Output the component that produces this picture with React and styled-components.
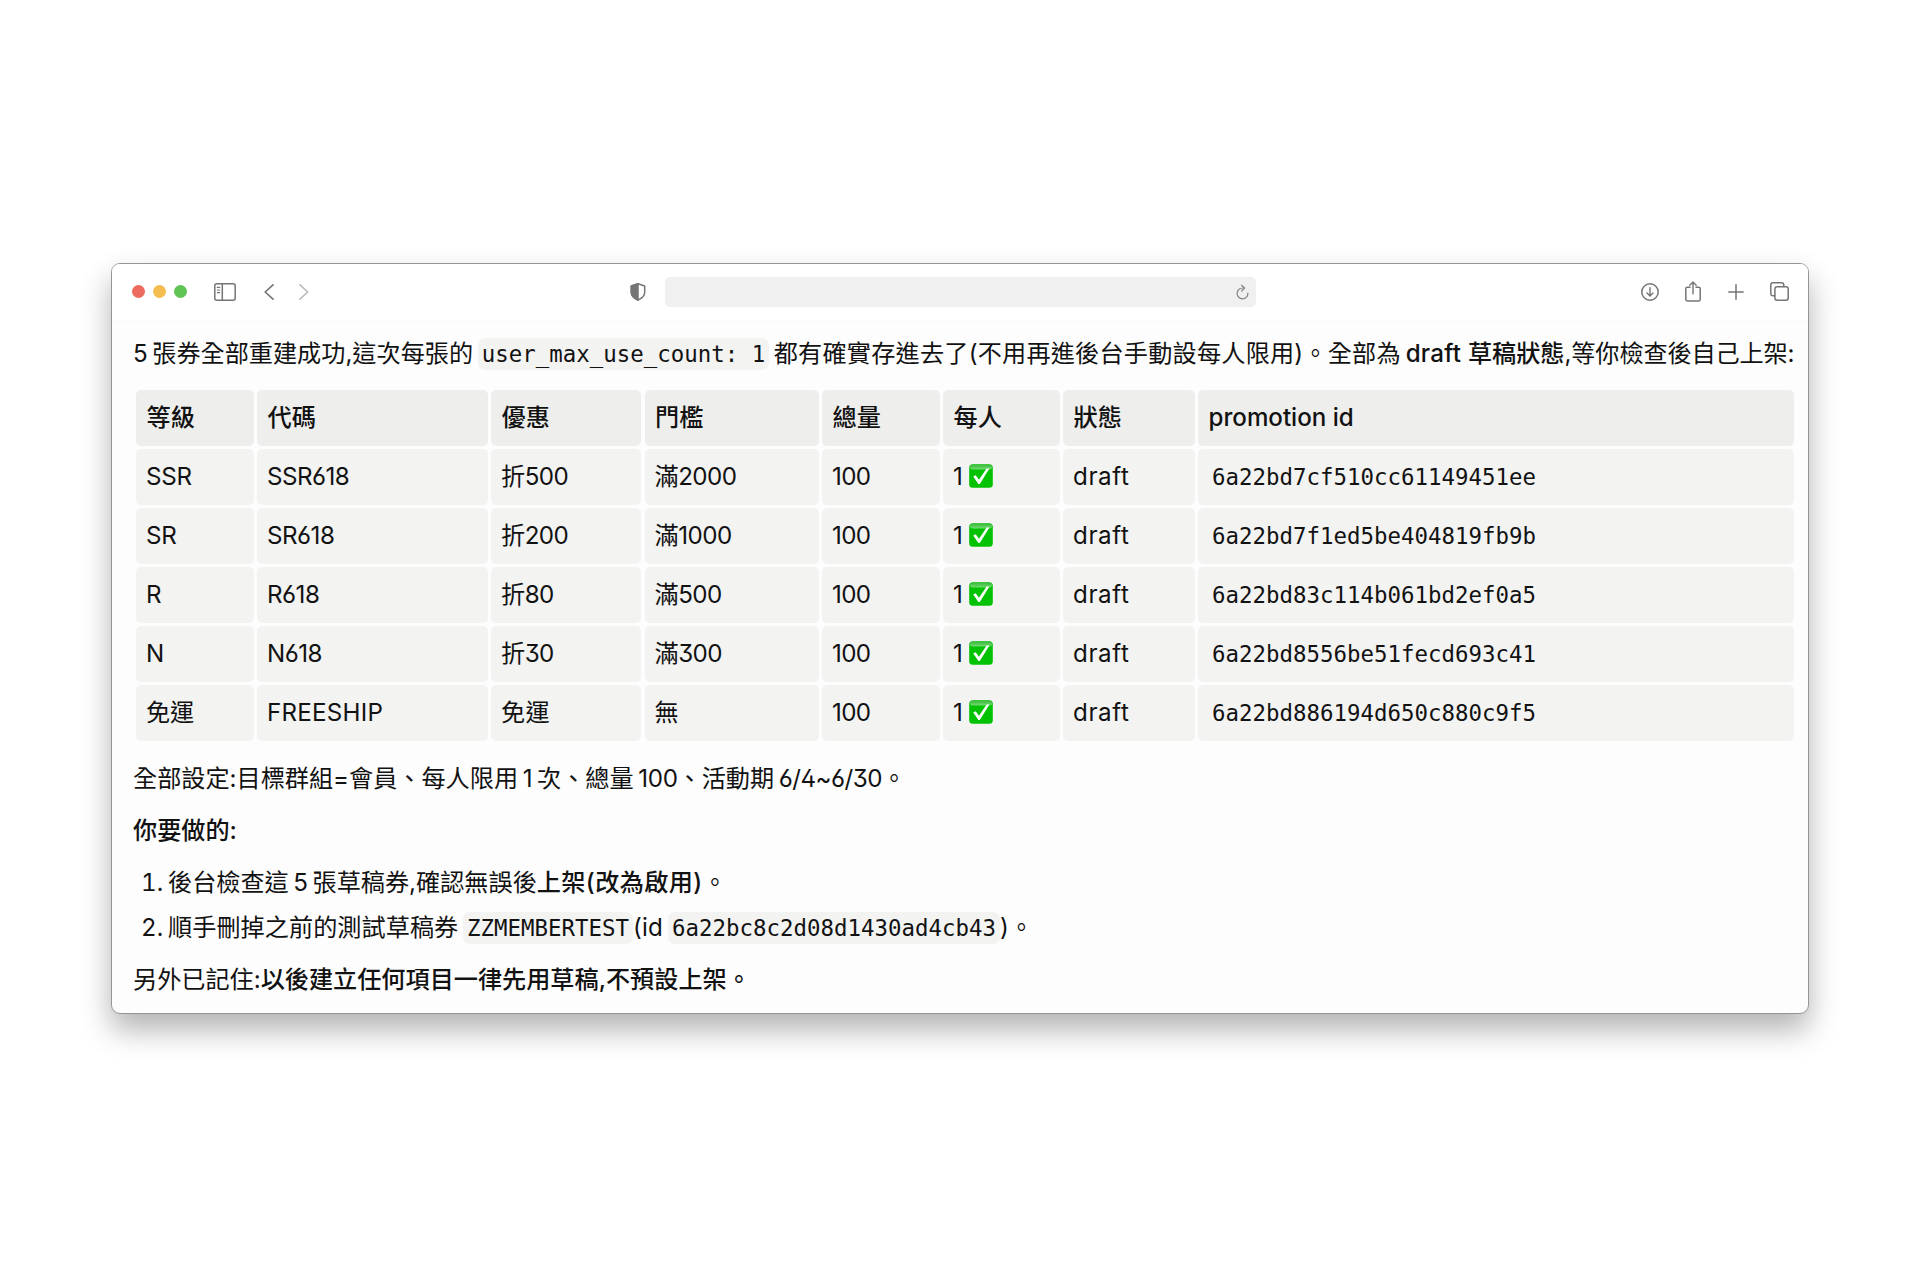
import React from 'react';
import styled, { createGlobalStyle } from 'styled-components';

const GlobalStyle = createGlobalStyle`
  * {
    box-sizing: border-box;
  }
  body {
    margin: 0;
    background: #fff;
    color: #121212;
    font-family: Inter, "Noto Sans CJK TC", sans-serif;
    font-size: 24.15px;
    font-feature-settings: "ss01";
  }
`;

const Page = styled.main`
  display: flex;
  align-items: flex-start;
  height: 1280px;
  padding: 263px 0 0 111px;
`;

const Window = styled.section`
  width: 1698px;
  height: 751px;
  border: 1px solid #959595;
  border-radius: 9px;
  background: #fdfdfd;
  overflow: hidden;
  box-shadow: 0 16px 30px rgba(0, 0, 0, 0.3);
`;

const Toolbar = styled.header`
  display: flex;
  align-items: center;
  height: 57px;
  padding: 0 19px 1px 20px;
  background: #fff;
  border-bottom: 1px solid #fafafa;
  color: #757575;
`;

const Lights = styled.div`
  display: flex;
  gap: 8px;
  margin-right: 26.5px;
`;

const Light = styled.span`
  width: 13px;
  height: 13px;
  border-radius: 50%;
  background: ${(props) => props.$color};
`;

const Icon = styled.svg`
  flex: none;
  width: ${(props) => props.$w}px;
  height: ${(props) => props.$h}px;
  margin-left: ${(props) => props.$ml || 0}px;
  color: ${(props) => props.$color || 'inherit'};
  fill: none;
  stroke: currentColor;
  stroke-width: 1.5;
  stroke-linecap: round;
  stroke-linejoin: round;
`;

const AddressBar = styled.div`
  display: flex;
  align-items: center;
  justify-content: flex-end;
  width: 591px;
  height: 30px;
  margin-left: 19px;
  padding-right: 7px;
  border-radius: 5px;
  background: #f0f0f0;
`;

const Actions = styled.div`
  display: flex;
  align-items: center;
  margin-left: auto;
`;

const Content = styled.article`
  padding: 15px 14px 0 21px;
  line-height: 36px;
  white-space: nowrap;
  word-spacing: -2.2px;
`;

const Paragraph = styled.p`
  height: 36px;
  margin: 0 0 ${(props) => props.$mb || 16}px;
`;

const Strong = styled.strong`
  font-weight: 500;
  word-spacing: 0;
`;

const Run = styled.span`
  letter-spacing: ${(props) => props.$ls}px;
`;

const Code = styled.code`
  padding: 3px 4px;
  border-radius: 7px;
  background: #f3f3f2;
  font-family: "DejaVu Sans Mono", monospace;
  font-size: 22.4px;
  letter-spacing: 0.02px;
  word-spacing: 0;
`;

const Table = styled.div`
  display: grid;
  grid-template-columns: 117.5px 230.5px 150px 174px 117.5px 116.5px 131.5px 596px;
  grid-auto-rows: 55.5px;
  gap: 3.5px;
  margin: 0 0 20.5px 3px;
`;

const Row = styled.div`
  display: contents;
`;

const Cell = styled.div`
  display: flex;
  align-items: center;
  padding: 1px 10px 0;
  border-radius: 5px;
  background: #f3f3f2;
  letter-spacing: ${(props) => props.$ls || 0}px;
`;

const HeadCell = styled(Cell)`
  padding-left: 10.5px;
  background: #eeeeed;
  font-weight: 500;
  word-spacing: 0;
`;

const CheckIcon = styled.svg`
  width: 24px;
  height: 24px;
  margin: -3px 0 0 6px;
`;

const List = styled.ol`
  display: flex;
  flex-direction: column;
  gap: 9px;
  margin: 0 0 16px;
  padding: 0;
  list-style: none;
`;

const Item = styled.li`
  display: flex;
  height: 36px;
`;

const Marker = styled.span`
  width: 35px;
  padding-left: 8px;
  font-variant-numeric: tabular-nums;
`;

const columns = ['等級', '代碼', '優惠', '門檻', '總量', '每人', '狀態', 'promotion id'];

const coupons = [
  { level: 'SSR', code: 'SSR618', offer: '折500', min: '滿2000', id: '6a22bd7cf510cc61149451ee' },
  { level: 'SR', code: 'SR618', offer: '折200', min: '滿1000', id: '6a22bd7f1ed5be404819fb9b' },
  { level: 'R', code: 'R618', offer: '折80', min: '滿500', id: '6a22bd83c114b061bd2ef0a5' },
  { level: 'N', code: 'N618', offer: '折30', min: '滿300', id: '6a22bd8556be51fecd693c41' },
  { level: '免運', code: 'FREESHIP', offer: '免運', min: '無', id: '6a22bd886194d650c880c9f5' },
];

const tracking = (text) => (/\d/.test(text) ? -0.5 : 0.25);

function Check() {
  return (
    <CheckIcon viewBox="0 0 24 24" role="img" aria-label="✅">
      <defs>
        <linearGradient id="gloss" x1="0" y1="0" x2="0" y2="1">
          <stop offset="0" stopColor="#3cb83c" />
          <stop offset="1" stopColor="#6fdc6f" />
        </linearGradient>
      </defs>
      <rect x="0.2" y="0.2" width="23.6" height="23.6" rx="3.6" fill="#03c103" />
      <rect x="0.8" y="0.8" width="22.4" height="4.6" rx="2.3" fill="url(#gloss)" />
      <path d="M4.2 12.6 6.7 11.2 10 15.8 17.6 4.6H20.4L10.8 20H9.4Z" fill="#fff" />
    </CheckIcon>
  );
}

function BrowserBar() {
  return (
    <Toolbar>
      <Lights>
        <Light $color="#ec6a5e" />
        <Light $color="#f3bd4f" />
        <Light $color="#5fc454" />
      </Lights>
      <Icon viewBox="0 0 22 18" $w={22} $h={18}>
        <rect x="0.8" y="0.8" width="20.4" height="16.4" rx="2" />
        <path d="M8.3 1v16" />
        <path d="M3.3 4.4h2.4M3.3 7h2.4M3.3 9.6h2.4" strokeWidth="1.1" />
      </Icon>
      <Icon viewBox="0 0 10 16" $w={10} $h={16} $ml={28.5}>
        <path d="M9 .8 1.2 8 9 15.2" strokeWidth="1.7" />
      </Icon>
      <Icon viewBox="0 0 10 16" $w={10} $h={16} $ml={25} $color="#bdbdbd">
        <path d="M1 .8 8.8 8 1 15.2" strokeWidth="1.7" />
      </Icon>
      <Icon viewBox="0 0 16 18" $w={16} $h={18} $ml={321}>
        <path d="M8 .8 14.7 3v6.6c0 3.7-3.2 5.9-6.7 7.6-3.5-1.7-6.7-3.9-6.7-7.6V3Z" />
        <path d="M8 .8v16.4c-3.5-1.7-6.7-3.9-6.7-7.6V3Z" fill="currentColor" />
      </Icon>
      <AddressBar>
        <Icon viewBox="0 0 13 16" $w={13} $h={16} $color="#858585">
          <path d="M11.9 9.2A5.4 5.4 0 1 1 6.6 4H8" strokeWidth="1.2" />
          <path d="M5.6 1.2 8.6 4 5.6 7" strokeWidth="1.2" />
        </Icon>
      </AddressBar>
      <Actions>
        <Icon viewBox="0 0 18 18" $w={18} $h={18}>
          <circle cx="9" cy="9" r="8.2" />
          <path d="M9 4.7v8.1M6 10l3 3 3-3" strokeWidth="1.4" />
        </Icon>
        <Icon viewBox="0 0 16 21" $w={16} $h={21} $ml={26}>
          <path d="M5 6.2H2.2Q.8 6.2.8 7.6v11q0 1.4 1.4 1.4h11.6q1.4 0 1.4-1.4v-11q0-1.4-1.4-1.4H11" />
          <path d="M8 12.8V1.2M4.8 4.2 8 1l3.2 3.2" strokeWidth="1.4" />
        </Icon>
        <Icon viewBox="0 0 16 16" $w={16} $h={16} $ml={27}>
          <path d="M8 .8v14.4M.8 8h14.4" />
        </Icon>
        <Icon viewBox="0 0 19 19" $w={19} $h={19} $ml={26.5}>
          <path d="M4.8 13.8H3q-2.2 0-2.2-2.2V3Q.8.8 3 .8h8.6q2.2 0 2.2 2.2v1.6" />
          <rect x="4.9" y="4.7" width="13.3" height="13.5" rx="2.2" />
        </Icon>
      </Actions>
    </Toolbar>
  );
}

function CouponTable() {
  return (
    <Table role="table">
      <Row role="row">
        {columns.map((title) => (
          <HeadCell key={title} role="columnheader">
            {title}
          </HeadCell>
        ))}
      </Row>
      {coupons.map((row) => (
        <Row key={row.id} role="row">
          <Cell $ls={-0.2}>{row.level}</Cell>
          <Cell $ls={tracking(row.code)}>{row.code}</Cell>
          <Cell $ls={tracking(row.offer)}>{row.offer}</Cell>
          <Cell $ls={tracking(row.min)}>{row.min}</Cell>
          <Cell $ls={-0.6}>100</Cell>
          <Cell>
            1<Check />
          </Cell>
          <Cell $ls={0.6}>draft</Cell>
          <Cell>
            <Code>{row.id}</Code>
          </Cell>
        </Row>
      ))}
    </Table>
  );
}

function App() {
  return (
    <>
      <GlobalStyle />
      <Page>
        <Window>
          <BrowserBar />
          <Content>
            <Paragraph $mb={18}>
              5 張券全部重建成功,這次每張的 <Code>user_max_use_count: 1</Code>{' '}
              <Run $ls={0.22}>都有確實存進去了(不用再進後台手動設每人限用)。全部為 </Run>
              <Strong>
                <Run $ls={0.25}>draft </Run>草稿狀態
              </Strong>
              <Run $ls={-0.12}>,等你檢查後自己上架:</Run>
            </Paragraph>
            <CouponTable />
            <Paragraph>
              全部設定:目標群組=會員、每人限用 1 次、總量 <Run $ls={-0.3}>100</Run>、活動期{' '}
              <Run $ls={-0.5}>6/4~6/30</Run>。
            </Paragraph>
            <Paragraph>
              <Strong>你要做的:</Strong>
            </Paragraph>
            <List>
              <Item>
                <Marker>1.</Marker>
                <span>
                  後台檢查這 5 張草稿券,確認無誤後
                  <Strong>
                    <Run $ls={0.4}>上架(改為啟用)</Run>
                  </Strong>
                  。
                </span>
              </Item>
              <Item>
                <Marker>2.</Marker>
                <span>
                  <Run $ls={0.05}>順手刪掉之前的測試草稿券 </Run>
                  <Code>ZZMEMBERTEST</Code>
                  <Run $ls={0.25}>(id </Run>
                  <Code>6a22bc8c2d08d1430ad4cb43</Code>
                  <Run $ls={0.4}>)</Run>。
                </span>
              </Item>
            </List>
            <Paragraph>
              另外已記住:<Strong>以後建立任何項目一律先用草稿,不預設上架。</Strong>
            </Paragraph>
          </Content>
        </Window>
      </Page>
    </>
  );
}

export default App;
